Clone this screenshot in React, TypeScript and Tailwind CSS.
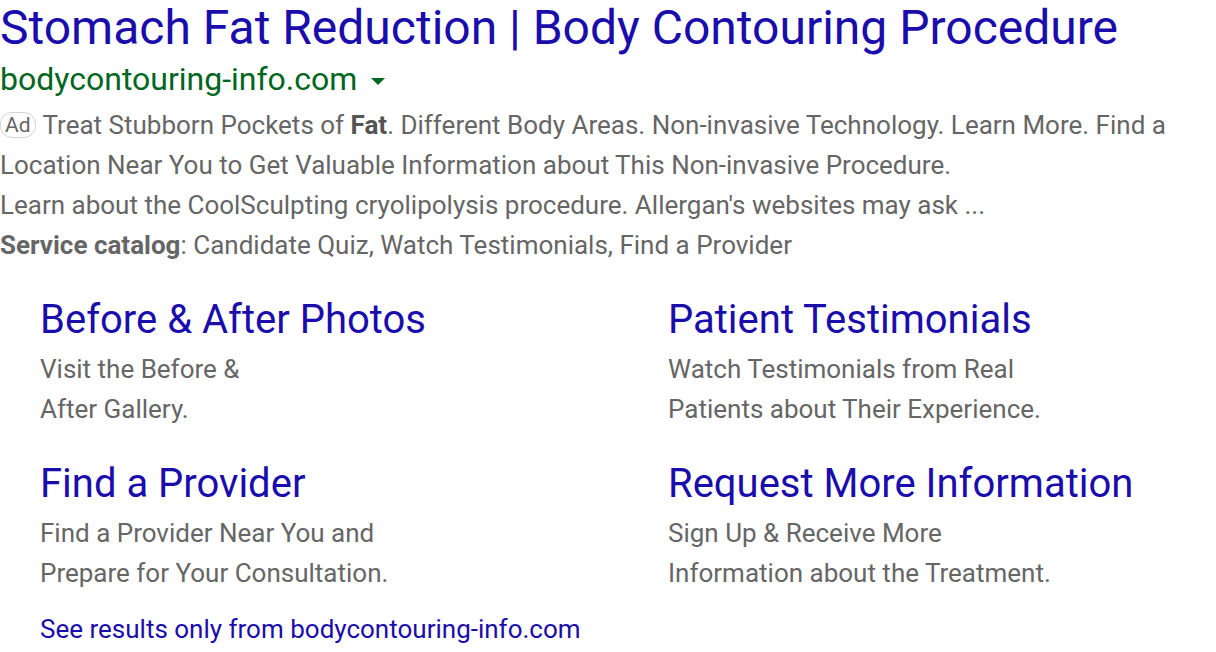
import React from 'react';

const sitelinks = [
  { title: 'Before & After Photos', lines: ['Visit the Before &', 'After Gallery.'] },
  { title: 'Patient Testimonials', lines: ['Watch Testimonials from Real', 'Patients about Their Experience.'] },
  { title: 'Find a Provider', lines: ['Find a Provider Near You and', 'Prepare for Your Consultation.'] },
  { title: 'Request More Information', lines: ['Sign Up & Receive More', 'Information about the Treatment.'] },
];

export default function App() {
  return (
    <div className="bg-white w-[1216px] h-[652px] overflow-hidden font-['Roboto',sans-serif]">
      {/* headline */}
      <h3 className="text-[#1a0dab] text-[48px] leading-[56px] whitespace-nowrap">
        Stomach Fat Reduction | Body Contouring Procedure
      </h3>
      <div className="flex items-center text-[#006621] text-[32px] leading-[51px] -mt-[2px]">
        <span>bodycontouring-info.com</span>
        <span className="ml-[14px] w-0 h-0 border-l-[7px] border-r-[7px] border-t-[7px] border-l-transparent border-r-transparent border-t-[#006621] mt-[4px]" />
      </div>

      {/* description */}
      <div className="text-[#666666] text-[26px] leading-[40px] whitespace-nowrap">
        <div>
          <span className="inline-block border border-[#d4d4d4] rounded-[12px] px-[4px] text-[21px] leading-[24px] mr-[7px] align-[2px]">
            Ad
          </span>
          Treat Stubborn Pockets of <b className="font-bold text-[#545454]">Fat</b>. Different Body Areas. Non-invasive Technology. Learn More. Find a
        </div>
        <div>Location Near You to Get Valuable Information about This Non-invasive Procedure.</div>
        <div>Learn about the CoolSculpting cryolipolysis procedure. Allergan's websites may ask ...</div>
        <div>
          <b className="font-bold">Service catalog</b>: Candidate Quiz, Watch Testimonials, Find a Provider
        </div>
      </div>

      {/* sitelinks */}
      <div className="grid grid-cols-[628px_1fr] pl-[40px] mt-[31px] gap-y-[31px]">
        {sitelinks.map((s) => (
          <div key={s.title}>
            <div className="text-[#1a0dab] text-[40px] leading-[48px] whitespace-nowrap">{s.title}</div>
            <div className="text-[#666666] text-[26px] leading-[40px] mt-[5px]">
              {s.lines.map((l) => (
                <div key={l}>{l}</div>
              ))}
            </div>
          </div>
        ))}
      </div>

      <div className="pl-[40px] mt-[20px] text-[#1a0dab] text-[26px] leading-[32px]">
        See results only from bodycontouring-info.com
      </div>
    </div>
  );
}
